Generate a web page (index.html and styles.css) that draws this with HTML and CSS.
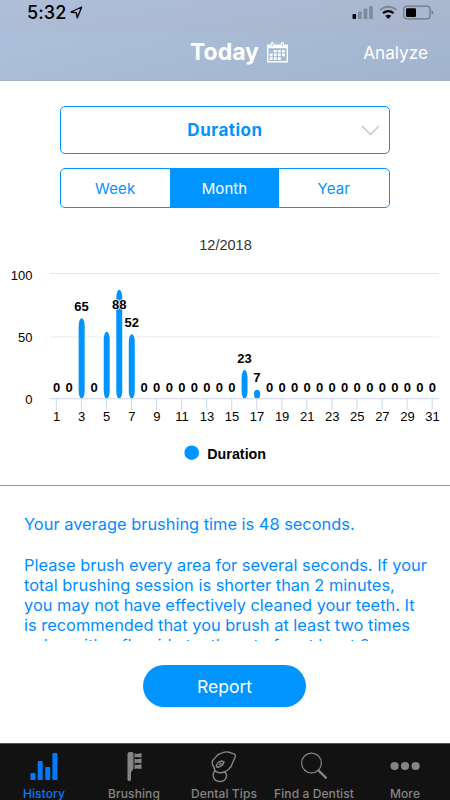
FILE: index.html
```html
<!DOCTYPE html>
<html lang="en">
<head>
  <meta charset="UTF-8" />
  <meta name="viewport" content="width=device-width, initial-scale=1.0" />
  <title>Brushing History</title>
  <link rel="stylesheet" href="styles.css">
</head>
<body>
  <header class="header">
    <div class="status-bar">
      <span class="time">5:32</span>
      <svg class="location" width="13" height="13" viewBox="0 0 13 13"><path d="M1 6 L11.7 1 L7.2 12 L6.4 6.8 Z" fill="none" stroke="#000" stroke-width="1.3" stroke-linejoin="round" /></svg>
      <svg class="signals" width="82" height="16" viewBox="0 0 82 16">
        <rect x="0.5" y="9" width="3.6" height="5" rx="1" />
        <g fill="#7d899f">
          <rect x="6" y="6.5" width="3.6" height="7.5" rx="1" />
          <rect x="11.7" y="3.5" width="3.6" height="10.5" rx="1" />
          <rect x="17.2" y="1" width="3.6" height="13" rx="1" />
        </g>
        <g fill="none" stroke-width="2.2">
          <path d="M28 5 Q36.3 -1.6 44.6 5" stroke="#7d899f" />
          <path d="M31 8.2 Q36.3 4 41.6 8.2" stroke="#000" />
        </g>
        <path d="M33.3 10.8 Q36.3 8.8 39.3 10.8 L36.3 14 Z" />
        <rect x="51.8" y="1.2" width="26.2" height="12.6" rx="3.4" fill="none" stroke="#6c778b" stroke-width="1.2" />
        <rect x="54" y="3.3" width="10" height="8.6" rx="1.2" />
        <path d="M79.6 5 Q83 7.5 79.6 10 Z" fill="#6c778b" />
      </svg>
    </div>
    <div class="nav-bar">
      <h1 class="title">Today</h1>
      <svg class="calendar" width="21" height="21" viewBox="0 0 21 21">
        <path d="M0.7 3.2 H20.3 V19.8 H0.7 Z" fill="none" stroke="#fff" stroke-width="1.4" />
        <path d="M0.7 3 H20.3 V6.2 H0.7 Z" fill="#fff" />
        <path d="M5.3 1.4 V4.4 M15.4 1.4 V4.4" stroke="#fff" stroke-width="2.8" stroke-linecap="round" />
        <path d="M5.3 1.6 V4.4 M15.4 1.6 V4.4" stroke="#a7bad3" stroke-width="0.9" />
        <path d="M6.7 9.2 H18.3 M2.7 12.9 H18.3 M2.7 16.6 H14.3" stroke="#fff" stroke-width="2.6" stroke-dasharray="2.9 1.2" />
      </svg>
      <a class="analyze">Analyze</a>
    </div>
  </header>

  <main class="content">
    <div class="select">
      <span>Duration</span>
      <svg class="chevron" width="19" height="11" viewBox="0 0 19 11"><path d="M1 1 L9.5 9.5 L18 1" fill="none" stroke="#c3c5c9" stroke-width="1.4" /></svg>
    </div>
    <div class="tabs">
      <button class="tab">Week</button>
      <button class="tab active">Month</button>
      <button class="tab">Year</button>
    </div>
    <svg class="chart" id="chart" width="450" height="277" viewBox="0 208 450 277"></svg>
    <section class="advice">
      <p>Your average brushing time is 48 seconds.</p>
      <p>Please brush every area for several seconds. If your<br>total brushing session is shorter than 2 minutes,<br>you may not have effectively cleaned your teeth. It<br>is recommended that you brush at least two times<br>a day with a fluoride toothpaste for at least 2</p>
    </section>
    <button class="report">Report</button>
  </main>

  <nav class="tab-bar">
    <a class="item active">
      <svg width="28" height="30" viewBox="0 0 28 30" fill="currentColor">
        <rect x="0.4" y="21" width="5" height="7" rx="1" /><rect x="7.7" y="9" width="5" height="19" rx="1" /><rect x="15.2" y="15" width="5" height="13" rx="1" /><rect x="22.4" y="1" width="5" height="27" rx="1" />
      </svg>
      <span>History</span>
    </a>
    <a class="item">
      <svg width="15" height="30" viewBox="0 0 15 30" fill="currentColor">
        <path d="M0.5 28 V2 Q0.5 0 2.5 0 H5 Q6.5 0 6.5 2 V16 Q6.5 18 4.8 19 Q4 20 4 22 V28 Q4 29 2.2 29 Q0.5 29 0.5 28 Z" />
        <path d="M7.5 1.2 L10 2 L14.5 1 V5.6 L10 5 L7.5 5.8 Z M7.5 6.7 L10 7.3 L14.5 6.5 V11.2 L10 10.7 L7.5 11.5 Z M7.5 12.5 L10 13 L14.5 12.2 V17 L10 16.4 L7.5 17 Z" />
      </svg>
      <span>Brushing</span>
    </a>
    <a class="item">
      <svg width="26" height="32" viewBox="0 0 26 32" fill="none" stroke="currentColor" stroke-width="1.4" stroke-linejoin="round">
        <path d="M1.2 11.5 Q1.5 8.5 4 7 Q6 3.5 9.5 2.5 Q14 0.2 18 1.2 L23.5 3.2 Q25 4.2 24 6.5 L21.5 12 Q20.5 16 17.5 18.5 L14.5 20.5 Q9 22.5 6 21.2 Q3 19.5 3.2 16.5 Q1 14 1.2 11.5 Z" />
        <path d="M7.2 11.5 L10.5 10 L13 11 L11.5 14.2 L7.8 16 Q4.8 17 5.5 14.2 Z M8.2 13.7 L11 12.3" />
        <path d="M4.5 19.5 C0 23 2.5 30.5 8.5 30.5 C15.5 30.5 17.5 23.5 13.3 20.8" />
      </svg>
      <span>Dental Tips</span>
    </a>
    <a class="item">
      <svg width="28" height="30" viewBox="0 0 28 30" fill="none" stroke="currentColor">
        <circle cx="11.5" cy="11" r="9.9" stroke-width="1.2" />
        <path d="M18.5 18.5 L25.8 25.7" stroke-width="2.4" stroke-linecap="round" />
      </svg>
      <span>Find a Dentist</span>
    </a>
    <a class="item">
      <svg width="30" height="30" viewBox="0 0 30 30" fill="currentColor">
        <circle cx="4.6" cy="14" r="4.1" /><circle cx="15" cy="14" r="4.1" /><circle cx="25.6" cy="14" r="4.1" />
      </svg>
      <span>More</span>
    </a>
  </nav>

  <script>
    const days = { 3: 65, 5: 54, 6: 88, 7: 52, 16: 23, 17: 7 };
    const base = 398.5;
    let svg = '<text class="chart-title" x="225.5" y="250">12/2018</text>';
    svg += '<path d="M50 273.5 H439" stroke="#e6e6e6"/><path d="M50 337 H439" stroke="#f2f2f2" stroke-width="1.5"/>';
    svg += '<text class="scale" x="32.5" y="280">100</text><text class="scale" x="32.5" y="342">50</text><text class="scale" x="32.5" y="404">0</text>';
    let labels = '';
    for (let d = 1; d <= 31; d++) {
      const x = 56.3 + (d - 1) * 12.53;
      const v = days[d] || 0;
      const top = base - v * 1.235;
      if (v) {
        svg += `<rect x="${x - 2.7}" y="${top}" width="6" height="${base - top}" rx="3" ry="${Math.min(8, v / 2)}" fill="#0094ff"/>`;
      }
      // day 5 has no value label
      if (d !== 5) {
        const y = d === 6 ? 309 : top - (v ? 7.5 : 6.5);
        labels += `<text class="value" x="${x + 0.2}" y="${y}">${v}</text>`;
      }
      if (d % 2) {
        svg += `<path d="M${x} 398.5 V410" stroke="#ccd6eb"/><text class="day" x="${x + 0.3}" y="421">${d}</text>`;
      }
    }
    svg += '<path d="M50 398.7 H439" stroke="#ccd6eb"/>' + labels;
    svg += '<circle cx="191.7" cy="452.7" r="7.3" fill="#0094ff"/><text class="legend" x="207.3" y="458.5">Duration</text>';
    document.getElementById("chart").innerHTML = svg;
  </script>
</body>
</html>
```
FILE: styles.css
```css
body {
  margin: 0;
  width: 450px;
  height: 800px;
  overflow: hidden;
  display: flex;
  flex-direction: column;
  background: white;
  font-family: Inter, sans-serif;
}
button {
  border: none;
  padding: 0;
  font-family: inherit;
}
.header {
  height: 80px;
  background: linear-gradient(165deg, #aec3de, #a2b4cd);
  border-bottom: 1px solid #a5b0c0;
}
.status-bar {
  height: 33px;
  box-sizing: border-box;
  padding: 4px 16px 0 27px;
  display: flex;
  align-items: flex-start;
  background: linear-gradient(170deg, #afbfd9, #a8b4cc);
}
.time {
  font-size: 18px;
  font-weight: 500;
  line-height: 18px;
  letter-spacing: 0.1px;
}
.location {
  margin: 2px 0 0 4px;
}
.signals {
  margin: 1px 0 0 auto;
}
.nav-bar {
  height: 38px;
  display: flex;
  align-items: center;
  padding: 0 22px 0 190px;
  color: white;
}
.title {
  margin: 0;
  font-size: 23px;
  font-weight: 700;
}
.calendar {
  margin-left: 8px;
}
.analyze {
  margin-left: auto;
  font-size: 17.2px;
}
.content {
  flex: 1;
  display: flex;
  flex-direction: column;
  align-items: center;
}
.select {
  width: 330px;
  height: 48px;
  box-sizing: border-box;
  margin: 25px 1px 0 0;
  padding: 0 9px 0 29px;
  border: 1px solid #0094ff;
  border-radius: 5px;
  display: flex;
  align-items: center;
  color: #0094ff;
  font-size: 17px;
  font-weight: 700;
  letter-spacing: 0.5px;
}
.select span {
  flex: 1;
  text-align: center;
}
.tabs {
  width: 330px;
  height: 40px;
  box-sizing: border-box;
  margin: 14px 1px 0 0;
  border: 1px solid #0094ff;
  border-radius: 5px;
  display: flex;
}
.tab {
  flex: 1;
  background: none;
  color: #0094ff;
  font-size: 15px;
  letter-spacing: 0.1px;
}
.tab.active {
  background: #0094ff;
  color: white;
}
.chart {
  display: block;
  flex-shrink: 0;
  font-family: "Liberation Sans", Arial, sans-serif;
  font-size: 13px;
}
.chart-title {
  font-size: 14.5px;
  fill: #333;
  text-anchor: middle;
}
.scale {
  text-anchor: end;
}
.day {
  text-anchor: middle;
}
.value {
  font-weight: bold;
  text-anchor: middle;
  stroke: white;
  stroke-width: 1.5px;
  paint-order: stroke;
}
.legend {
  font-size: 14.3px;
  font-weight: bold;
}
.advice {
  width: 100%;
  height: 156px;
  box-sizing: border-box;
  padding: 0 24px;
  border-top: 1px solid #999;
  overflow: hidden;
  color: #008cff;
  font-size: 16.4px;
  line-height: 20.1px;
  white-space: nowrap;
}
.advice p {
  margin: 0 0 20.6px;
}
.advice p:first-child {
  margin-top: 28px;
}
.report {
  width: 163px;
  height: 42px;
  margin: 24px 1px 0 0;
  border-radius: 21px;
  background: #0094ff;
  color: white;
  font-size: 17.5px;
}
.tab-bar {
  height: 57px;
  box-sizing: border-box;
  border-top: 1px solid #555;
  background: #121212;
  display: flex;
}
.item {
  width: 90px;
  flex-shrink: 0;
  display: flex;
  flex-direction: column;
  align-items: center;
  margin-left: -1px;
  margin-right: 1px;
  color: #858585;
  font-size: 12px;
  font-weight: 500;
  white-space: nowrap;
}
.item.active {
  color: #007bff;
}
.item svg {
  height: 32px;
  flex-shrink: 0;
  margin-top: 7px;
}
.item span {
  line-height: 16px;
  margin-top: 3px;
  letter-spacing: 0.1px;
}
.item:last-child {
  padding-left: 1px;
}
```
